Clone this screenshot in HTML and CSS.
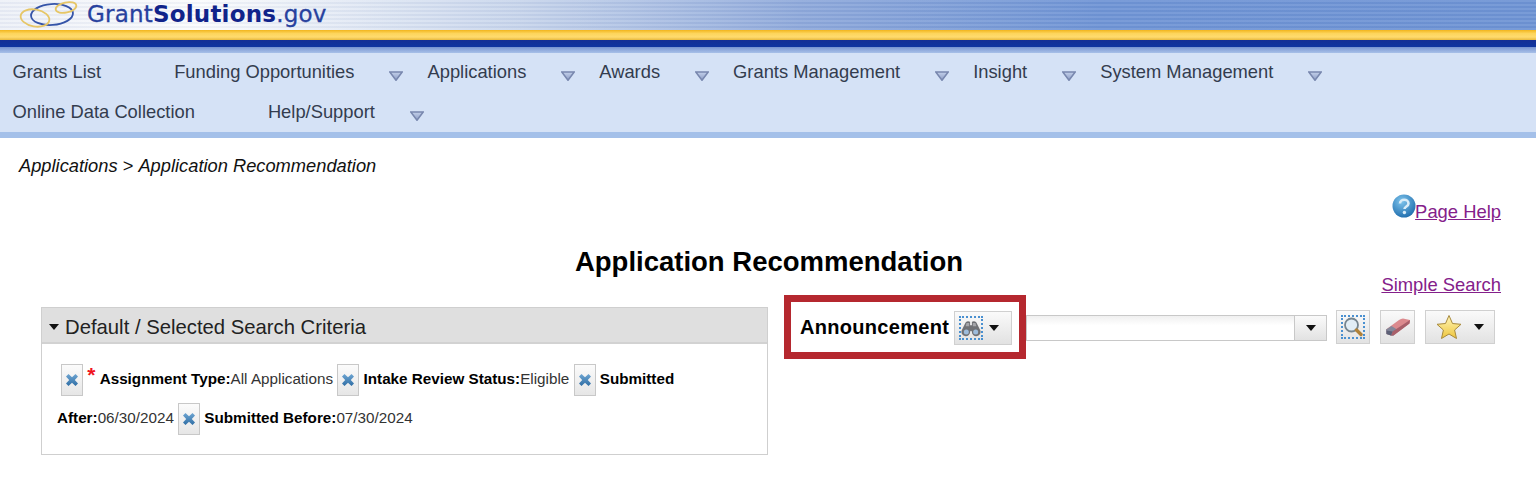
FILE: index.html
```html
<!DOCTYPE html>
<html lang="en">
<head>
<meta charset="utf-8">
<title>Application Recommendation</title>
<link rel="stylesheet" href="styles.css">
</head>
<body>
<svg class="defs" width="0" height="0" aria-hidden="true">
  <defs>
    <linearGradient id="arrowFill" x1="0" y1="0" x2="0" y2="1"><stop offset="0" stop-color="#c3d0ea"/><stop offset="1" stop-color="#8c9cc4"/></linearGradient>
    <linearGradient id="btnBlue" x1="0" y1="0" x2="0" y2="1"><stop offset="0" stop-color="#6ea5d2"/><stop offset="1" stop-color="#2f6ea5"/></linearGradient>
    <radialGradient id="helpBall" cx="0.4" cy="0.3" r="0.8"><stop offset="0" stop-color="#7ec4ec"/><stop offset="1" stop-color="#1766a8"/></radialGradient>
    <linearGradient id="starFill" x1="0" y1="0" x2="0" y2="1"><stop offset="0" stop-color="#fff6b8"/><stop offset="1" stop-color="#eec53c"/></linearGradient>
    <symbol id="nav-arrow" viewBox="0 0 14 10"><path d="M0.8 1H13.2L7 9.300Z" fill="url(#arrowFill)" stroke="#7887ae" stroke-width="1.500"/></symbol>
    <symbol id="remove-x" viewBox="0 0 14 14"><path d="M1 3.500 3.500 1 7 4.200 10.500 1 13 3.500 9.800 7 13 10.500 10.500 13 7 9.800 3.500 13 1 10.500 4.200 7Z" fill="url(#btnBlue)"/></symbol>
    <symbol id="binoculars" viewBox="0 0 22 20"><path d="M5 4Q7 1.500 10 3V7H12V3Q15 1.500 17 4L21 12A4.800 4.800 0 1 1 12 14L11 13 10 14A4.800 4.800 0 1 1 1 12Z" fill="#707175"/><path d="M6 4.500H9V8H5Z" fill="#a5a6aa"/><path d="M13 4.500H16L17 8H13Z" fill="#a5a6aa"/><circle cx="5.800" cy="14.500" r="2.800" fill="#9dbcdc"/><circle cx="16.200" cy="14.500" r="2.800" fill="#9dbcdc"/></symbol>
  </defs>
</svg>

<header class="banner">
  <div class="logo">
    <svg class="logo-mark" viewBox="0 0 60 30" width="60" height="30" aria-hidden="true">
      <ellipse cx="34" cy="14.500" rx="21" ry="10.500" fill="none" stroke="#3554a8" stroke-width="1.800" transform="rotate(-4 34 14.500)"/>
      <ellipse cx="17" cy="18" rx="14.500" ry="8.500" fill="none" stroke="#e6c666" stroke-width="1.800" transform="rotate(10 17 18)"/>
      <ellipse cx="48" cy="7.500" rx="10.500" ry="5" fill="none" stroke="#e6c666" stroke-width="1.800" transform="rotate(-12 48 7.500)"/>
    </svg>
    <span class="logo-text">Grant<b>Solutions</b>.gov</span>
  </div>
</header>
<div class="rule-gold"></div>
<div class="rule-blue"></div>

<nav class="nav">
  <a class="nav-item">Grants List<span class="arrow-slot"></span></a>
  <a class="nav-item">Funding Opportunities<svg class="arrow-slot"><use href="#nav-arrow"/></svg></a>
  <a class="nav-item">Applications<svg class="arrow-slot"><use href="#nav-arrow"/></svg></a>
  <a class="nav-item">Awards<svg class="arrow-slot"><use href="#nav-arrow"/></svg></a>
  <a class="nav-item">Grants Management<svg class="arrow-slot"><use href="#nav-arrow"/></svg></a>
  <a class="nav-item">Insight<svg class="arrow-slot"><use href="#nav-arrow"/></svg></a>
  <a class="nav-item">System Management<svg class="arrow-slot"><use href="#nav-arrow"/></svg></a>
  <a class="nav-item">Online Data Collection<span class="arrow-slot"></span></a>
  <a class="nav-item">Help/Support<svg class="arrow-slot"><use href="#nav-arrow"/></svg></a>
</nav>

<main class="page">
  <div class="crumbs"><i>Applications</i> &gt; <i>Application Recommendation</i></div>
  <div class="help-row">
    <svg class="help-icon" viewBox="0 0 24 24" aria-hidden="true"><circle cx="12" cy="12" r="11.500" fill="url(#helpBall)"/><path d="M8 9.500C8 4.500 16.500 4.500 16.500 9.500C16.500 12.500 12.500 12.500 12.500 15" fill="none" stroke="#d8ecf8" stroke-width="2.600"/><circle cx="12.400" cy="18.500" r="1.700" fill="#d8ecf8"/></svg>
    <a class="link" href="#">Page Help</a>
  </div>
  <h1 class="title">Application Recommendation</h1>
  <div class="simple-row"><a class="link" href="#">Simple Search</a></div>

  <div class="columns">
    <section class="panel">
      <div class="panel-head"><span class="caret caret-head"></span>Default / Selected Search Criteria</div>
      <div class="panel-body">
        <p class="criteria">
          <button class="x-btn"><svg class="x-icon"><use href="#remove-x"/></svg></button>
          <span class="req">*</span>
          <b>Assignment Type:</b>All Applications
          <button class="x-btn"><svg class="x-icon"><use href="#remove-x"/></svg></button>
          <b>Intake Review Status:</b>Eligible
          <button class="x-btn"><svg class="x-icon"><use href="#remove-x"/></svg></button>
          <b>Submitted After:</b>06/30/2024
          <button class="x-btn"><svg class="x-icon"><use href="#remove-x"/></svg></button>
          <b>Submitted Before:</b>07/30/2024
        </p>
      </div>
    </section>

    <section class="search">
      <div class="callout">
        <span class="search-label">Announcement</span>
        <button class="tool tool-binoc">
          <span class="focus-box"><svg class="binoc"><use href="#binoculars"/></svg></span>
          <span class="caret"></span>
        </button>
      </div>
      <div class="combo"><span class="combo-btn"><span class="caret"></span></span></div>
      <button class="tool tool-square">
        <span class="focus-box focus-search">
          <svg viewBox="0 0 20 20" width="20" height="20" aria-hidden="true"><circle cx="8.500" cy="8" r="6.500" fill="#e2edf5" stroke="#76858f" stroke-width="1.800"/><path d="M13.500 13 18 17.500" stroke="#b0823a" stroke-width="3.400" stroke-linecap="round"/></svg>
        </span>
      </button>
      <button class="tool tool-square tool-eraser">
        <svg viewBox="0 0 26 20" width="26" height="20" aria-hidden="true"><path d="M1 12.500 14 3Q16 1.500 18 1.500L25 3 24.500 6.500 10.500 17Q8.500 19 6 18.500L1.500 17Z" fill="#dc8a8e"/><path d="M1 12.500 6.500 9 12 12.500 8.500 18.800 6 18.500 1.500 17Z" fill="#84879a"/><path d="M7.500 14.500 25 3 24.500 6.500 10.500 17Q8.500 19 6 18.500Z" fill="#a8606a"/><path d="M1.500 13.500 7.500 14.500 6 18.500 1.500 17Z" fill="#5c6076"/></svg>
      </button>
      <button class="tool tool-star">
        <svg viewBox="0 0 26 26" width="26" height="26" aria-hidden="true"><path d="M13 1.500 16.500 9.500 25 10.300 18.600 16 20.500 24.500 13 20 5.500 24.500 7.400 16 1 10.300 9.500 9.500Z" fill="url(#starFill)" stroke="#a88a3c" stroke-width="1"/></svg>
        <span class="caret"></span>
      </button>
    </section>
  </div>
</main>
</body>
</html>
```

FILE: styles.css
```css
* { box-sizing: border-box; }
html, body { margin: 0; padding: 0; }
body {
  width: 1536px;
  height: 496px;
  overflow: hidden;
  background: #fff;
  font-family: "Liberation Sans", Arial, sans-serif;
  color: #000;
}
.defs { position: absolute; }

.banner {
  height: 30px;
  background:
    repeating-linear-gradient(180deg, rgba(255,255,255,0.07) 0 2px, rgba(40,70,140,0.05) 2px 4px),
    linear-gradient(90deg, #eef1f8 0, #fbfcfd 200px, #c9d6ec 520px, #90aadb 800px, #7095d5 1100px, #6f94d4 100%);
}
.logo { display: flex; align-items: center; height: 30px; padding-left: 18px; }
.logo-mark { flex: none; }
.logo-text {
  margin-left: 9px;
  margin-top: -2px;
  font-family: "DejaVu Sans", sans-serif;
  font-size: 23px;
  line-height: 28px;
  color: #27419e;
  letter-spacing: 0.2px;
  -webkit-text-stroke: 0.3px #27419e;
}
.logo-text b { color: #10238a; -webkit-text-stroke: 0; }

.rule-gold { height: 10px; background: linear-gradient(180deg, #f2b51c 0, #fdd55c 35%, #ffdb6e 70%, #e8b83c 100%); }
.rule-blue { height: 13px; background: linear-gradient(180deg, #142f95 0, #0f349f 50%, #7e9ad4 58%, #a7c0e8 100%); }

.nav {
  display: flex;
  flex-wrap: wrap;
  align-content: flex-start;
  height: 85px;
  padding: 0 0 0 12.500px;
  background: #d5e2f6;
  border-bottom: 6px solid #a4c0e9;
}
.nav-item {
  display: flex;
  align-items: center;
  height: 40px;
  padding-bottom: 2px;
  font-size: 18.340px;
  color: #333c4e;
  white-space: nowrap;
}
.arrow-slot {
  display: block;
  flex: none;
  width: 14px;
  height: 10px;
  margin: 7px 24px 0 35px;
}

.page { padding: 0 35px 0 0; }
.crumbs {
  margin: 17px 0 0 19px;
  height: 21px;
  font-size: 18.300px;
  line-height: 21px;
  color: #111;
}
.help-row {
  display: flex;
  justify-content: flex-end;
  align-items: flex-start;
  margin-top: 19px;
  height: 30px;
}
.help-icon { width: 24px; height: 24px; margin-top: -1px; margin-right: -1px; }
.link {
  color: #84208a;
  font-size: 18.400px;
  line-height: 24px;
  margin-top: 5px;
  text-decoration: underline;
}
.title {
  margin: 18px 0 0;
  padding-left: 37px;
  height: 38px;
  text-align: center;
  font-size: 27.500px;
  line-height: 38px;
  font-weight: bold;
}
.simple-row { display: flex; justify-content: flex-end; height: 24px; margin-top: -8px; }
.simple-row .link { margin-top: 0; }

.columns { display: flex; align-items: flex-start; padding-left: 41px; }

.panel {
  flex: none;
  width: 727px;
  height: 148px;
  margin-top: 10px;
  border: 1px solid #cfcfcf;
}
.panel-head {
  display: flex;
  align-items: center;
  height: 36px;
  padding: 4px 0 0 7px;
  background: #dfdfdf;
  border-bottom: 2px solid #d2d2d2;
  font-size: 20.300px;
  color: #222;
}
.panel-body { padding: 11px 15px 0; }
.criteria {
  margin: 0;
  font-size: 15.240px;
  line-height: 39px;
  text-indent: 4px;
  color: #333;
}
.criteria b { color: #000; }
.x-btn {
  display: inline-flex;
  align-items: center;
  justify-content: center;
  vertical-align: middle;
  width: 22px;
  height: 32px;
  padding: 0;
  background: linear-gradient(180deg, #fbfbfb, #e6e6e6);
  border: 1px solid #c8c8c8;
  border-radius: 0;
}
.x-icon { width: 14px; height: 14px; }
.req { color: #f0141e; font-size: 21px; font-weight: bold; vertical-align: 2px; }

.search { flex: 1; display: flex; align-items: flex-start; margin-left: 16px; position: relative; }
.callout {
  display: flex;
  align-items: center;
  flex: none;
  width: 242px;
  height: 64px;
  margin-top: -2px;
  padding: 1px 0 0 9px;
  border: 7px solid #b5282f;
  background: #fff;
  position: relative;
  z-index: 1;
}
.search-label { font-size: 20px; font-weight: bold; color: #000; letter-spacing: 0.3px; }
.tool {
  display: inline-flex;
  align-items: center;
  justify-content: center;
  padding: 0;
  background: linear-gradient(180deg, #fafafa, #e2e2e2);
  border: 1px solid #d0d0d0;
  border-radius: 0;
}
.tool-binoc { width: 58px; height: 34px; margin-left: 5px; gap: 6px; justify-content: flex-start; padding-left: 4px; }
.focus-box { display: flex; align-items: center; justify-content: center; width: 24px; height: 24px; border: 2px dotted #4a90d0; }
.binoc { width: 20px; height: 18px; }
.caret {
  display: inline-block;
  width: 0; height: 0;
  border-left: 5.500px solid transparent;
  border-right: 5.500px solid transparent;
  border-top: 6.500px solid #111;
}
.caret-head { margin-right: 6px; }
.combo {
  display: flex;
  justify-content: flex-end;
  flex: none;
  width: 301px;
  height: 26px;
  margin: 18px 0 0 0;
  background: linear-gradient(180deg, #f0f0f0, #fff 40%);
  border: 1px solid #c8c8c8;
}
.combo-btn {
  display: flex;
  align-items: center;
  justify-content: center;
  width: 32px;
  background: linear-gradient(180deg, #fafafa, #e2e2e2);
  border-left: 1px solid #c8c8c8;
}
.tool-square { width: 34px; height: 34px; margin: 13px 0 0 9px; }
.tool-eraser { width: 35px; margin-left: 10px; }
.focus-search { width: 24px; height: 24px; }
.tool-star { width: 70px; height: 34px; margin: 13px 0 0 10px; gap: 12px; }
```
